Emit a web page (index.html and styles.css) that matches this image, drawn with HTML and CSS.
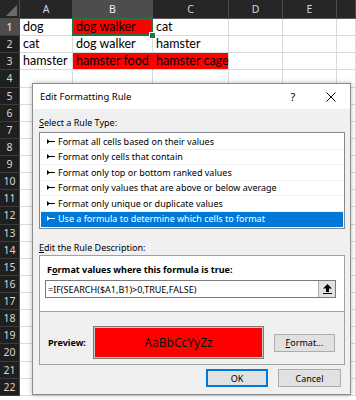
FILE: index.html
```html
<!DOCTYPE html>
<html>
<head>
<meta charset="utf-8">
<link rel="stylesheet" href="styles.css">
</head>
<body>
<div class="sheet">
  <span class="corner"></span>
  <span class="ch">A</span><span class="ch sel">B</span><span class="ch">C</span><span class="ch">D</span><span class="ch">E</span><span class="ch"></span>

  <span class="rh sel">1</span><span class="c">dog</span><span class="c red active">dog walker</span><span class="c">cat</span><span class="c"></span><span class="c"></span><span class="c"></span>
  <span class="rh">2</span><span class="c">cat</span><span class="c">dog walker</span><span class="c">hamster</span><span class="c"></span><span class="c"></span><span class="c"></span>
  <span class="rh">3</span><span class="c">hamster</span><span class="c red join">hamster food</span><span class="c red">hamster cage</span><span class="c"></span><span class="c"></span><span class="c"></span>
  <span class="rh">4</span><span class="c"></span><span class="c"></span><span class="c"></span><span class="c"></span><span class="c"></span><span class="c"></span>
  <span class="rh">5</span><span class="c"></span><span class="c"></span><span class="c"></span><span class="c"></span><span class="c"></span><span class="c"></span>
  <span class="rh">6</span><span class="c"></span><span class="c"></span><span class="c"></span><span class="c"></span><span class="c"></span><span class="c"></span>
  <span class="rh">7</span><span class="c"></span><span class="c"></span><span class="c"></span><span class="c"></span><span class="c"></span><span class="c"></span>
  <span class="rh">8</span><span class="c"></span><span class="c"></span><span class="c"></span><span class="c"></span><span class="c"></span><span class="c"></span>
  <span class="rh">9</span><span class="c"></span><span class="c"></span><span class="c"></span><span class="c"></span><span class="c"></span><span class="c"></span>
  <span class="rh">10</span><span class="c"></span><span class="c"></span><span class="c"></span><span class="c"></span><span class="c"></span><span class="c"></span>
  <span class="rh">11</span><span class="c"></span><span class="c"></span><span class="c"></span><span class="c"></span><span class="c"></span><span class="c"></span>
  <span class="rh">12</span><span class="c"></span><span class="c"></span><span class="c"></span><span class="c"></span><span class="c"></span><span class="c"></span>
  <span class="rh">13</span><span class="c"></span><span class="c"></span><span class="c"></span><span class="c"></span><span class="c"></span><span class="c"></span>
  <span class="rh">14</span><span class="c"></span><span class="c"></span><span class="c"></span><span class="c"></span><span class="c"></span><span class="c"></span>
  <span class="rh">15</span><span class="c"></span><span class="c"></span><span class="c"></span><span class="c"></span><span class="c"></span><span class="c"></span>
  <span class="rh">16</span><span class="c"></span><span class="c"></span><span class="c"></span><span class="c"></span><span class="c"></span><span class="c"></span>
  <span class="rh">17</span><span class="c"></span><span class="c"></span><span class="c"></span><span class="c"></span><span class="c"></span><span class="c"></span>
  <span class="rh">18</span><span class="c"></span><span class="c"></span><span class="c"></span><span class="c"></span><span class="c"></span><span class="c"></span>
  <span class="rh">19</span><span class="c"></span><span class="c"></span><span class="c"></span><span class="c"></span><span class="c"></span><span class="c"></span>
  <span class="rh">20</span><span class="c"></span><span class="c"></span><span class="c"></span><span class="c"></span><span class="c"></span><span class="c"></span>
  <span class="rh">21</span><span class="c"></span><span class="c"></span><span class="c"></span><span class="c"></span><span class="c"></span><span class="c"></span>
  <span class="rh">22</span><span class="c"></span><span class="c"></span><span class="c"></span><span class="c"></span><span class="c"></span><span class="c"></span>
</div>

<div class="dialog">
  <div class="titlebar">
    <span class="title">Edit Formatting Rule</span>
    <span class="help">?</span>
    <span class="close"><svg width="10" height="10" viewBox="0 0 10 10"><path d="M0.5 0.5 L9.5 9.5 M9.5 0.5 L0.5 9.5" stroke="#000" stroke-width="1" fill="none"/></svg></span>
  </div>
  <div class="dbody">
    <div class="label"><u>S</u>elect a Rule Type:</div>
    <ul class="rules">
      <li><svg class="arr" width="8" height="7" viewBox="0 0 8 7"><path d="M0 1 L3 3.5 L0 6 Z"/><rect x="2" y="3" width="6" height="1"/></svg>Format all cells based on their values</li>
      <li><svg class="arr" width="8" height="7" viewBox="0 0 8 7"><path d="M0 1 L3 3.5 L0 6 Z"/><rect x="2" y="3" width="6" height="1"/></svg>Format only cells that contain</li>
      <li><svg class="arr" width="8" height="7" viewBox="0 0 8 7"><path d="M0 1 L3 3.5 L0 6 Z"/><rect x="2" y="3" width="6" height="1"/></svg>Format only top or bottom ranked values</li>
      <li><svg class="arr" width="8" height="7" viewBox="0 0 8 7"><path d="M0 1 L3 3.5 L0 6 Z"/><rect x="2" y="3" width="6" height="1"/></svg>Format only values that are above or below average</li>
      <li><svg class="arr" width="8" height="7" viewBox="0 0 8 7"><path d="M0 1 L3 3.5 L0 6 Z"/><rect x="2" y="3" width="6" height="1"/></svg>Format only unique or duplicate values</li>
      <li class="selected"><svg class="arr" width="8" height="7" viewBox="0 0 8 7"><path d="M0 1 L3 3.5 L0 6 Z"/><rect x="2" y="3" width="6" height="1"/></svg>Use a formula to determine which cells to format</li>
    </ul>
    <div class="label desc-label"><u>E</u>dit the Rule Description:</div>
    <div class="desc">
      <div class="desc-top">
        <div class="bold ftitle">F<u>o</u>rmat values where this formula is true:</div>
        <div class="formula">
          <span class="ftext">=IF(SEARCH($A1,B1)&gt;0,TRUE,FALSE)</span>
          <span class="pick"><svg width="9" height="10" viewBox="0 0 9 10"><path d="M4.5 0 L9 4.5 L6 4.5 L6 8 L3 8 L3 4.5 L0 4.5 Z" fill="#000"/><rect x="0" y="9" width="9" height="1" fill="#000"/></svg></span>
        </div>
      </div>
      <div class="desc-bottom">
        <span class="bold plabel">Preview:</span>
        <div class="preview">AaBbCcYyZz</div>
        <span class="btn fmt"><u>F</u>ormat...</span>
      </div>
    </div>
    <div class="actions">
      <span class="btn ok">OK</span>
      <span class="btn cancel">Cancel</span>
    </div>
  </div>
</div>
</body>
</html>
```
FILE: styles.css
```css
html, body {
  margin: 0;
  padding: 0;
  width: 356px;
  height: 400px;
  overflow: hidden;
  background: #fff;
}

.sheet {
  display: grid;
  grid-template-columns: 20px 53px 80px 76px 54px 54px 19px;
  grid-template-rows: 19px repeat(22, 17.14px);
  font-family: "Lato", "Liberation Sans", sans-serif;
  font-size: 12.5px;
  color: #000;
}

.corner {
  background: #262626;
  border-right: 1px solid #4a4a4a;
  border-bottom: 1px solid #4a4a4a;
  box-sizing: border-box;
  position: relative;
}
.corner::after {
  content: "";
  position: absolute;
  right: 2px;
  bottom: 2px;
  width: 0;
  height: 0;
  border-left: 11px solid transparent;
  border-bottom: 11px solid #6b6b6b;
}

.ch {
  background: #262626;
  color: #d6d6d6;
  font-family: "Noto Sans", sans-serif;
  font-size: 10.5px;
  display: flex;
  align-items: center;
  justify-content: center;
  box-sizing: border-box;
  border-right: 1px solid #4a4a4a;
  border-bottom: 1px solid #5a5a5a;
}
.ch.sel {
  background: #4d4d4d;
  color: #f0f0f0;
}

.rh {
  background: #1f1f1f;
  color: #d6d6d6;
  font-family: "Noto Sans", sans-serif;
  font-size: 10.5px;
  display: flex;
  align-items: center;
  justify-content: center;
  box-sizing: border-box;
  border-bottom: 1px solid #3c3c3c;
  border-right: 1px solid #4a4a4a;
}
.rh.sel {
  background: #4d4d4d;
  color: #f0f0f0;
}

.c {
  box-sizing: border-box;
  border-right: 1px solid #dadada;
  border-bottom: 1px solid #dadada;
  padding: 0 0 1px 3px;
  display: flex;
  align-items: flex-end;
  white-space: nowrap;
  line-height: 15px;
  overflow: visible;
}
.c.red {
  background: #ff0000;
}
.c.join {
  border-right-color: #ff0000;
}
.c.active {
  position: relative;
}
.c.active::after {
  content: "";
  position: absolute;
  left: -1px;
  top: -1px;
  right: -1px;
  bottom: -1px;
  border: 2px solid #217346;
}
.c.active::before {
  content: "";
  position: absolute;
  right: -4px;
  bottom: -4px;
  width: 5px;
  height: 5px;
  background: #217346;
  border: 1px solid #fff;
  z-index: 2;
}

/* dialog */
.dialog {
  position: absolute;
  left: 32px;
  top: 83px;
  width: 319px;
  height: 312px;
  box-sizing: border-box;
  border: 1px solid #8c8c8c;
  background: #f0f0f0;
  box-shadow: 0 0 5px rgba(0, 0, 0, 0.28);
  font-family: "Noto Sans", sans-serif;
  font-size: 9px;
  color: #000;
  display: flex;
  flex-direction: column;
}

.titlebar {
  height: 25px;
  background: #fff;
  display: flex;
  align-items: center;
  padding: 0 9px 0 7px;
  flex: none;
}
.title {
  flex: 1;
  font-size: 9.5px;
}
.help {
  width: 20px;
  text-align: center;
  font-size: 11px;
}
.close {
  width: 20px;
  margin-left: 18px;
  display: flex;
  justify-content: center;
}

.dbody {
  padding: 7px 5px 0 6px;
  display: flex;
  flex-direction: column;
}

.label {
  line-height: 14px;
}
.desc-label {
  line-height: 12px;
  margin-top: 13px;
  margin-bottom: 1px;
}

.rules {
  list-style: none;
  margin: 2px 0 0 0;
  padding: 1px;
  background: #fff;
  border: 1px solid #828790;
}
.rules li {
  height: 15.5px;
  line-height: 15.5px;
  padding-left: 6px;
  display: flex;
  align-items: center;
  box-sizing: border-box;
  border-bottom: 1px solid #f0f0f0;
}
.rules li.selected {
  background: #0078d7;
  color: #fff;
  border-bottom-color: #0078d7;
}
.arr {
  fill: currentColor;
  margin-right: 3px;
  flex: none;
}

.desc {
  border: 1px solid #a0a0a0;
  display: flex;
  flex-direction: column;
}
.desc-top {
  background: #fff;
  padding: 7px 8px 13px 5px;
  border-bottom: 1px solid #a0a0a0;
}
.bold {
  font-weight: 700;
}
.ftitle {
  line-height: 13px;
  margin-left: 2px;
}
.formula {
  margin-top: 4px;
  height: 18px;
  box-sizing: border-box;
  border: 1px solid #7a7a7a;
  background: #fff;
  display: flex;
  align-items: center;
}
.ftext {
  flex: 1;
  padding-left: 2px;
}
.pick {
  width: 17px;
  height: 16px;
  box-sizing: border-box;
  background: #e1e1e1;
  border-left: 1px solid #adadad;
  display: flex;
  align-items: center;
  justify-content: center;
}

.desc-bottom {
  display: flex;
  align-items: center;
  padding: 14px 8px 5px 8px;
}
.plabel {
  width: 45px;
  flex: none;
}
.preview {
  width: 171px;
  height: 33px;
  box-sizing: border-box;
  border: 1px solid #7a7a7a;
  box-shadow: inset 0 0 0 1px #c8c8c8;
  background: #ff0000;
  display: flex;
  align-items: center;
  justify-content: center;
  font-size: 12px;
  color: #111;
}

.btn {
  display: flex;
  align-items: center;
  justify-content: center;
  box-sizing: border-box;
  background: #e1e1e1;
  border: 1px solid #adadad;
  height: 18px;
}
.fmt {
  width: 61px;
  margin-left: 10px;
}

.actions {
  display: flex;
  justify-content: flex-end;
  margin-top: 4px;
  margin-right: 4px;
  gap: 10px;
}
.ok {
  width: 62px;
  border: 2px solid #0078d7;
}
.cancel {
  width: 63px;
}
```
